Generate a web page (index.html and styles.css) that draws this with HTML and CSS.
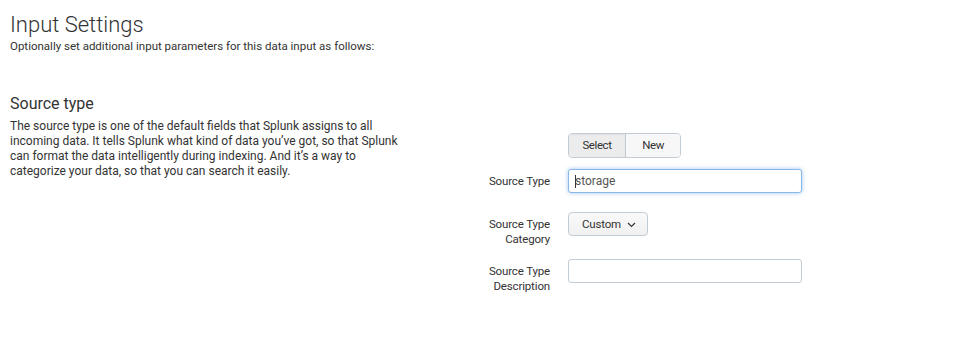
FILE: index.html
```html
<!DOCTYPE html>
<html lang="en">
<head>
    <meta charset="UTF-8">
    <meta name="viewport" content="width=device-width, initial-scale=1.0">
    <title>Input Settings</title>
    <link rel="stylesheet" href="styles.css">
</head>
<body>
    <div class="page">
        <h1 class="page-title">Input Settings</h1>
        <p class="page-intro">Optionally set additional input parameters for this data input as follows:</p>

        <div class="section">
            <div class="section-info">
                <h2 class="section-title">Source type</h2>
                <p class="section-text">The source type is one of the default fields that Splunk assigns to all incoming data. It tells Splunk what kind of data you’ve got, so that Splunk can format the data intelligently during indexing. And it’s a way to categorize your data, so that you can search it easily.</p>
            </div>

            <div class="section-form">
                <div class="form-row form-row--toggle">
                    <div class="form-label"></div>
                    <div class="btn-group">
                        <span class="btn btn--active btn--select">Select</span>
                        <span class="btn btn--new">New</span>
                    </div>
                </div>

                <div class="form-row form-row--single">
                    <label class="form-label">Source Type</label>
                    <div class="text-input text-input--focus"><span class="caret"></span>storage</div>
                </div>

                <div class="form-row form-row--double">
                    <label class="form-label">Source Type<br>Category</label>
                    <div class="dropdown">Custom
                        <svg class="dropdown-arrow" width="9" height="6" viewBox="0 0 9 6">
                            <path d="M1 1 L4.5 4.5 L8 1" fill="none" stroke="#333" stroke-width="1.2"/>
                        </svg>
                    </div>
                </div>

                <div class="form-row">
                    <label class="form-label">Source Type<br>Description</label>
                    <div class="text-input"></div>
                </div>
            </div>
        </div>
    </div>
</body>
</html>
```

FILE: styles.css
```css
body {
    margin: 0;
    background: #fff;
    color: #333;
    font-family: Roboto, "Liberation Sans", sans-serif;
    font-size: 12px;
}

.page {
    padding: 11px 10px 0 10px;
}

.page-title {
    margin: 0;
    font-size: 22px;
    font-weight: 300;
    line-height: 28px;
    color: #333;
}

.page-intro {
    margin: 0;
    font-size: 11.5px;
    line-height: 15px;
}

/*
 * SOURCE TYPE SECTION
 */
.section {
    display: flex;
    margin-top: 40px;
}

.section-info {
    width: 395px;
    flex-shrink: 0;
}

.section-title {
    margin: 0;
    font-size: 16px;
    font-weight: 400;
    line-height: 20px;
}

.section-text {
    margin: 5px 0 0 0;
    line-height: 15px;
}

.section-form {
    padding-top: 39px;
}

.form-row {
    display: flex;
    align-items: flex-start;
}

.form-row--toggle {
    margin-bottom: 11px;
}

.form-row--single {
    margin-bottom: 19px;
}

.form-row--double {
    margin-bottom: 12px;
}

.form-label {
    width: 145px;
    flex-shrink: 0;
    margin-right: 18px;
    padding-top: 5px;
    font-size: 11.5px;
    letter-spacing: -0.15px;
    line-height: 15px;
    text-align: right;
}

.form-row--toggle .form-label {
    padding-top: 0;
}

/* buttons */
.btn-group {
    display: flex;
    border: 1px solid #c3cbd4;
    border-radius: 4px;
    overflow: hidden;
    height: 23px;
}

.btn {
    display: flex;
    align-items: center;
    justify-content: center;
    font-size: 11.5px;
    letter-spacing: -0.4px;
    line-height: 15px;
    color: #333;
    background: #f7f7f7;
}

.btn--select {
    width: 56px;
    border-right: 1px solid #c3cbd4;
}

.btn--new {
    width: 54px;
}

.btn--active {
    background: #ececec;
    box-shadow: inset 0 1px 2px rgba(0,0,0,0.05);
}

.dropdown {
    display: flex;
    align-items: center;
    justify-content: center;
    gap: 6px;
    box-sizing: border-box;
    width: 80px;
    height: 24px;
    padding-left: 2px;
    border: 1px solid #c3cbd4;
    border-radius: 4px;
    background: linear-gradient(#f9f9f9, #f1f1f1);
    font-size: 11.5px;
    letter-spacing: -0.2px;
    line-height: 15px;
}

.dropdown-arrow {
    margin-top: 1px;
}

/* inputs */
.text-input {
    box-sizing: border-box;
    width: 234px;
    height: 24px;
    border: 1px solid #c3cbd4;
    border-radius: 3px;
    background: #fff;
    padding: 0 6px;
    display: flex;
    align-items: center;
    color: #555;
    font-size: 12px;
}

.text-input--focus {
    border-color: #86b8e8;
    box-shadow: 0 0 4px rgba(82,150,230,0.55);
}

.caret {
    display: inline-block;
    width: 1px;
    height: 13px;
    margin-right: -1px;
    background: #333;
}
```
